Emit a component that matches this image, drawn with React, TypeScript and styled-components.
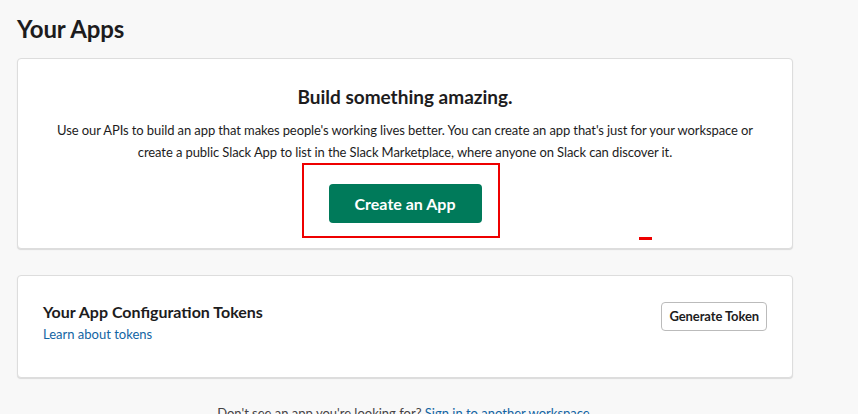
import React from "react";
import styled, { createGlobalStyle } from "styled-components";

const GlobalStyle = createGlobalStyle`
  body {
    margin: 0;
    background: #f8f8f8;
    font-family: Lato, "Noto Sans", sans-serif;
    color: #1d1c1d;
  }
`;

const Page = styled.div`
  padding: 14px 65px 0 17px;
  height: 414px;
  box-sizing: border-box;
  overflow: hidden;
`;

const Title = styled.h1`
  margin: 0 0 14px;
  font-size: 24px;
  line-height: 30px;
  font-weight: 700;
  letter-spacing: -0.1px;
`;

const Card = styled.section`
  position: relative;
  background: #fff;
  border: 1px solid #dddddd;
  border-radius: 4px;
  box-shadow: 0 1px 1px rgba(0, 0, 0, 0.12);
`;

const Hero = styled(Card)`
  padding: 27px 24px 25px;
  text-align: center;
`;

const HeroTitle = styled.h2`
  margin: 0;
  font-size: 19px;
  line-height: 22px;
  font-weight: 700;
`;

const HeroText = styled.p`
  margin: 11px auto 21px;
  max-width: 710px;
  font-size: 13px;
  line-height: 22px;
  letter-spacing: -0.1px;
`;

const Marked = styled.div`
  position: relative;
  display: inline-block;
`;

const Highlight = styled.span`
  position: absolute;
  left: -27px;
  right: -18px;
  top: -21px;
  bottom: -15px;
  border: 2px solid #ee0000;
  pointer-events: none;
`;

const Dash = styled.span`
  position: absolute;
  left: 621px;
  top: 178px;
  width: 13px;
  height: 3px;
  background: #ee0000;
`;

const PrimaryButton = styled.button`
  height: 39px;
  width: 153px;
  padding: 0;
  border: none;
  border-radius: 4px;
  background: #007a5a;
  color: #fff;
  font-family: inherit;
  font-size: 16px;
  font-weight: 700;
  cursor: pointer;
`;

const TokenCard = styled(Card)`
  margin-top: 26px;
  padding: 25px 25px 32px 25px;
  display: flex;
  align-items: center;
  justify-content: space-between;
  min-height: 44px;
`;

const TokenInfo = styled.div`
  display: flex;
  flex-direction: column;
`;

const TokenTitle = styled.h3`
  margin: 0;
  font-size: 16px;
  line-height: 22px;
  font-weight: 700;
`;

const Link = styled.a`
  color: #1264a3;
  text-decoration: none;
  font-size: 13px;
  line-height: 22px;
  cursor: pointer;
`;

const OutlineButton = styled.button`
  height: 29px;
  padding: 0 7px;
  border: 1px solid #bbbbbb;
  border-radius: 4px;
  background: #fff;
  color: #1d1c1d;
  font-family: inherit;
  font-size: 13px;
  font-weight: 700;
  letter-spacing: -0.1px;
  cursor: pointer;
`;

const TokenSide = styled.div`
  margin-top: -14px;
`;

const Footer = styled.p`
  margin: 24px 0 0;
  text-align: center;
  font-size: 13px;
  line-height: 22px;
  color: #454245;
`;

export default function App() {
  return (
    <>
      <GlobalStyle />
      <Page>
        <Title>Your Apps</Title>
        <Hero>
          <HeroTitle>Build something amazing.</HeroTitle>
          <HeroText>
            Use our APIs to build an app that makes people's working lives
            better. You can create an app that's just for your workspace or
            create a public Slack App to list in the Slack Marketplace, where
            anyone on Slack can discover it.
          </HeroText>
          <Marked>
            <PrimaryButton>Create an App</PrimaryButton>
            <Highlight />
          </Marked>
          <Dash />
        </Hero>
        <TokenCard>
          <TokenInfo>
            <TokenTitle>Your App Configuration Tokens</TokenTitle>
            <Link>Learn about tokens</Link>
          </TokenInfo>
          <TokenSide>
            <OutlineButton>Generate Token</OutlineButton>
          </TokenSide>
        </TokenCard>
        <Footer>
          Don't see an app you're looking for?{" "}
          <Link>Sign in to another workspace.</Link>
        </Footer>
      </Page>
    </>
  );
}
